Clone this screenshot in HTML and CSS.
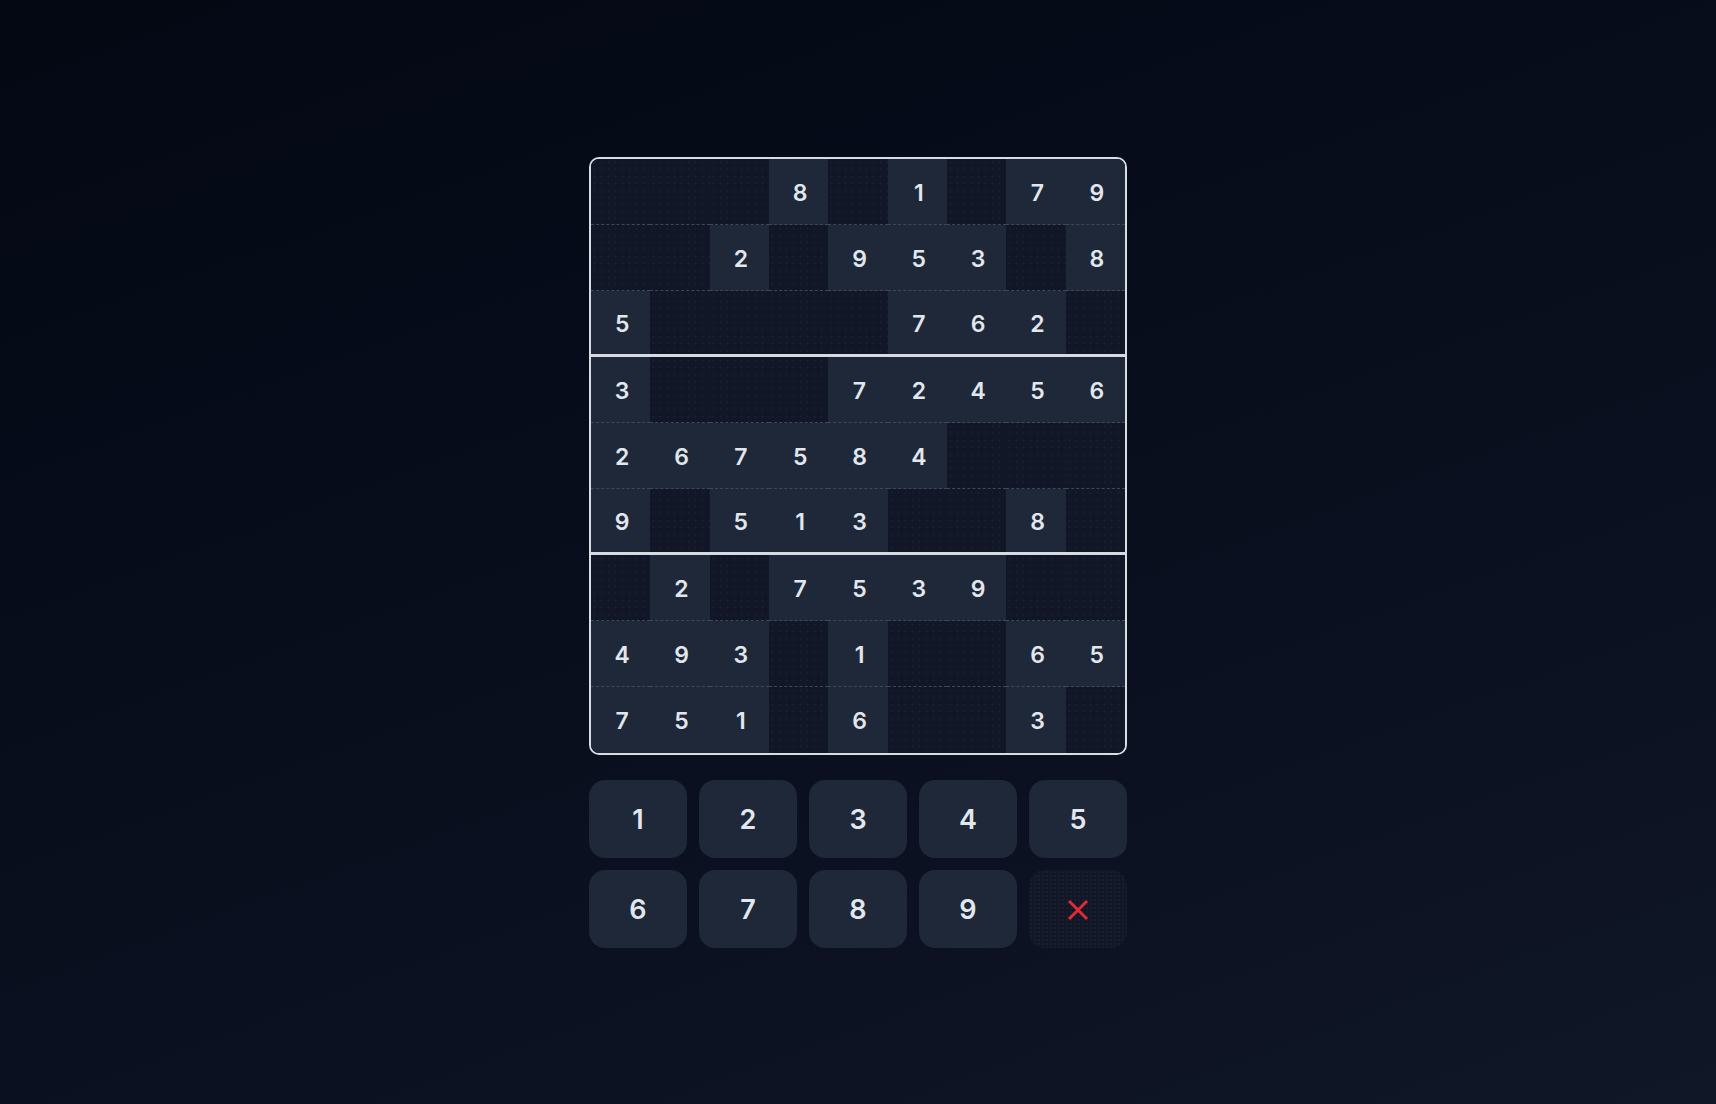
FILE: index.html
```html
<!DOCTYPE html>
<html lang="en">
<head>
<meta charset="utf-8">
<title>Sudoku</title>
<link rel="stylesheet" href="styles.css">
</head>
<body>
<main class="game">
  <div class="board">
    <div class="cell empty"></div><div class="cell empty"></div><div class="cell empty"></div><div class="cell">8</div><div class="cell empty"></div><div class="cell">1</div><div class="cell empty"></div><div class="cell">7</div><div class="cell">9</div>
    <div class="cell empty"></div><div class="cell empty"></div><div class="cell">2</div><div class="cell empty"></div><div class="cell">9</div><div class="cell">5</div><div class="cell">3</div><div class="cell empty"></div><div class="cell">8</div>
    <div class="cell box-end">5</div><div class="cell empty box-end"></div><div class="cell empty box-end"></div><div class="cell empty box-end"></div><div class="cell empty box-end"></div><div class="cell box-end">7</div><div class="cell box-end">6</div><div class="cell box-end">2</div><div class="cell empty box-end"></div>
    <div class="cell">3</div><div class="cell empty"></div><div class="cell empty"></div><div class="cell empty"></div><div class="cell">7</div><div class="cell">2</div><div class="cell">4</div><div class="cell">5</div><div class="cell">6</div>
    <div class="cell">2</div><div class="cell">6</div><div class="cell">7</div><div class="cell">5</div><div class="cell">8</div><div class="cell">4</div><div class="cell empty"></div><div class="cell empty"></div><div class="cell empty"></div>
    <div class="cell box-end">9</div><div class="cell empty box-end"></div><div class="cell box-end">5</div><div class="cell box-end">1</div><div class="cell box-end">3</div><div class="cell empty box-end"></div><div class="cell empty box-end"></div><div class="cell box-end">8</div><div class="cell empty box-end"></div>
    <div class="cell empty"></div><div class="cell">2</div><div class="cell empty"></div><div class="cell">7</div><div class="cell">5</div><div class="cell">3</div><div class="cell">9</div><div class="cell empty"></div><div class="cell empty"></div>
    <div class="cell">4</div><div class="cell">9</div><div class="cell">3</div><div class="cell empty"></div><div class="cell">1</div><div class="cell empty"></div><div class="cell empty"></div><div class="cell">6</div><div class="cell">5</div>
    <div class="cell last">7</div><div class="cell last">5</div><div class="cell last">1</div><div class="cell empty last"></div><div class="cell last">6</div><div class="cell empty last"></div><div class="cell empty last"></div><div class="cell last">3</div><div class="cell empty last"></div>
  </div>
  <div class="keypad">
    <button class="key">1</button>
    <button class="key">2</button>
    <button class="key">3</button>
    <button class="key">4</button>
    <button class="key">5</button>
    <button class="key">6</button>
    <button class="key">7</button>
    <button class="key">8</button>
    <button class="key">9</button>
    <button class="key erase" aria-label="Erase">
      <svg width="22" height="22" viewBox="0 0 22 22" aria-hidden="true"><path d="M2 2 L20 20 M20 2 L2 20" stroke="#e3283a" stroke-width="3" stroke-linecap="butt" fill="none"/></svg>
    </button>
  </div>
</main>
</body>
</html>
```
FILE: styles.css
```css
html, body {
  margin: 0;
  padding: 0;
  height: 100%;
}
body {
  background: linear-gradient(160deg, #030813 0%, #070d1b 40%, #0c1221 75%, #101727 100%);
  font-family: Inter, "Noto Sans", "Liberation Sans", sans-serif;
  color: #e2e6ed;
  display: flex;
  align-items: center;
  justify-content: center;
  min-height: 1104px;
}
.game {
  width: 538px;
  display: flex;
  flex-direction: column;
  gap: 25px;
}
.board {
  box-sizing: border-box;
  width: 538px;
  border: 2px solid #d8dce3;
  border-radius: 10px;
  overflow: hidden;
  display: grid;
  grid-template-columns: repeat(9, 1fr);
  grid-auto-rows: 66px;
}
.cell {
  box-sizing: border-box;
  background: #1e2838;
  border-bottom: 1px dashed #3d4859;
  display: flex;
  align-items: center;
  justify-content: center;
  padding: 3px 0 0 3px;
  font-size: 23px;
  font-weight: 600;
  color: #e2e6ed;
}
.cell.empty {
  background-color: #111726;
  background-image: radial-gradient(circle, #1b2436 0.7px, transparent 1.1px);
  background-size: 7px 7px;
}
.cell.box-end {
  border-bottom: 3px solid #d6dae1;
}
.cell.last {
  border-bottom: none;
}
.keypad {
  display: grid;
  grid-template-columns: repeat(5, 1fr);
  gap: 12px;
}
.key {
  height: 78px;
  border: none;
  border-radius: 16px;
  background: #1e2838;
  color: #e2e6ed;
  font-family: Inter, "Noto Sans", "Liberation Sans", sans-serif;
  font-size: 27px;
  font-weight: 600;
  display: flex;
  align-items: center;
  justify-content: center;
  padding: 2px 0 0 0;
}
.key.erase {
  background-color: #111726;
  background-image: radial-gradient(circle, #1a2334 0.6px, transparent 1px);
  background-size: 4px 4px;
}
```
